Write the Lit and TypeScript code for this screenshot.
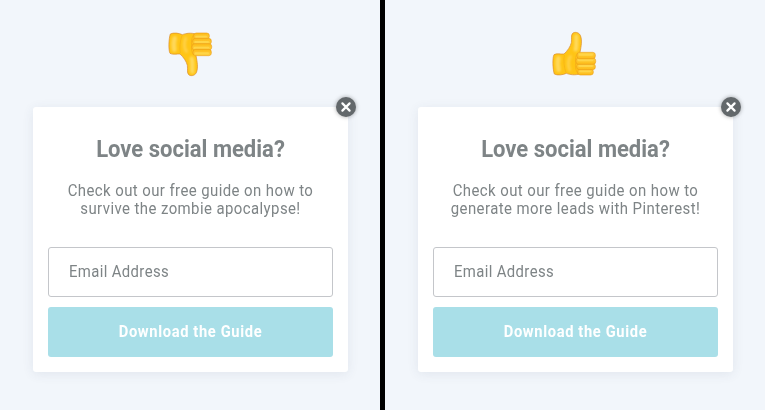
import { LitElement, html, svg, css } from "lit";
import { customElement, property } from "lit/decorators.js";
import { classMap } from "lit/directives/class-map.js";

@customElement("thumb-icon")
class ThumbIcon extends LitElement {
  @property({ type: Boolean }) down = false;

  static styles = css`
    :host { display: block; width: 60px; height: 60px; }
    svg { display: block; width: 60px; height: 60px; }
    .flip { transform: scaleY(-1); }
    .soft { filter: blur(2.5px); }
  `;

  render() {
    const finger = (x: number, y: number, w: number, h: number) => svg`
      <rect x=${x} y=${y} width=${w} height=${h} rx="8" fill="url(#f)" stroke="#eb9c18" stroke-width="1.8"/>
      <path d="M${x + 8} ${y + 7}h${w - 18}" stroke="#ffd548" stroke-width="6" stroke-linecap="round"/>`;
    return html`
      <svg viewBox="0 0 180 180" fill="none" class=${classMap({ flip: this.down })}>
        <defs>
          <linearGradient id="f" x1="0" y1="0" x2="0" y2="1">
            <stop offset="0" stop-color="#ffd042"/>
            <stop offset="1" stop-color="#fdbb17"/>
          </linearGradient>
        </defs>
        <path d="M27 92C33 87 50 91 57 90C68 80 76 68 79 56C81 44 77 34 83 28C88 23 101 24 106 34C112 48 109 66 105 85L106 149C90 155 75 152 64 148C54 153 37 155 28 150C23 136 22 101 27 92Z"
          fill="#ffc515" stroke="#d98a2c" stroke-width="2"/>
        <g class="soft">
          <path d="M94 37C93 50 96 63 92 76" stroke="#ffd95a" stroke-width="13" stroke-linecap="round"/>
          <path d="M76 98C68 108 69 126 74 137" stroke="#ffd044" stroke-width="10" stroke-linecap="round"/>
          <path d="M40 103C37 114 38 127 41 137" stroke="#ffd85a" stroke-width="14" stroke-linecap="round"/>
        </g>
        <path d="M58 93C55 106 57 132 63 146" stroke="#f4af16" stroke-width="2"/>
        ${finger(98, 135, 47, 18)}
        ${finger(95, 119, 56, 18)}
        ${finger(93, 102, 59, 19)}
        ${finger(96, 85, 55, 19)}
        <path d="M98 87C92 94 90 106 92 116C90 128 92 142 100 150" stroke="#f3a81a" stroke-width="2"/>
      </svg>`;
  }
}

@customElement("signup-card")
class SignupCard extends LitElement {
  @property({ type: Array }) lines: string[] = [];

  static styles = css`
    :host { display: block; }
    .card {
      position: relative; box-sizing: border-box; width: 315px; height: 265px;
      padding: 28px 15px 15px; border-radius: 3px; background: #fff;
      box-shadow: 0 2px 12px rgba(60, 70, 100, .09);
      font-family: Roboto, "Liberation Sans", sans-serif; text-align: center;
    }
    h2 { margin: 0; font-size: 24px; line-height: 28px; font-weight: 700; letter-spacing: 0; color: #7e8486; transform: scaleX(.918); }
    p { margin: 19px 0 0; font-size: 16px; line-height: 18px; font-weight: 400; letter-spacing: .45px; height: 65px; color: #7e8486; transform: scaleX(.934); }
    .line { display: block; white-space: nowrap; }
    .field {
      box-sizing: border-box; height: 50px; padding: 0 19.5px; border: 1px solid #c4c6ca; border-radius: 3px;
      font-size: 16px; line-height: 48px; font-weight: 400; letter-spacing: .4px; text-align: left; color: #7e8486;
    }
    .hint { display: block; transform: scaleX(.93); transform-origin: left; }
    .submit {
      display: block; width: 100%; height: 50px; margin-top: 10px; padding: 0; border: 0; border-radius: 3px;
      background: #a9dfe8; color: #fff; font: 700 16px/50px Roboto, "Liberation Sans", sans-serif; letter-spacing: .7px;
    }
    .label { display: block; transform: scaleX(.918); }
    .close {
      position: absolute; top: -10px; right: -8px; width: 20px; height: 20px; border-radius: 50%;
      background: #63686b; box-shadow: 0 0 4px rgba(0, 0, 0, .35);
    }
    .close svg { display: block; }
  `;

  render() {
    return html`
      <div class="card">
        <h2>Love social media?</h2>
        <p>${this.lines.map((l) => html`<span class="line">${l}</span>`)}</p>
        <div class="field"><span class="hint">Email Address</span></div>
        <button class="submit"><span class="label">Download the Guide</span></button>
        <div class="close">
          <svg width="20" height="20" viewBox="0 0 20 20">
            <path d="M6.4 6.4l7.2 7.2M13.6 6.4l-7.2 7.2" stroke="#fff" stroke-width="2.2" stroke-linecap="round"/>
          </svg>
        </div>
      </div>`;
  }
}

@customElement("app-root")
class AppRoot extends LitElement {
  static styles = css`
    :host { display: grid; grid-template-columns: 380px 380px; column-gap: 5px; width: 765px; height: 410px; background: #000; overflow: hidden; }
    .pane { display: flex; flex-direction: column; background: #f2f6fb; padding: 24px 0 0 33px; }
    thumb-icon { margin: 0 0 23px 127px; }
    .down { margin-left: 128px; }
  `;

  render() {
    return html`
      <section class="pane">
        <thumb-icon class="down" down></thumb-icon>
        <signup-card .lines=${["Check out our free guide on how to", "survive the zombie apocalypse!"]}></signup-card>
      </section>
      <section class="pane">
        <thumb-icon></thumb-icon>
        <signup-card .lines=${["Check out our free guide on how to", "generate more leads with Pinterest!"]}></signup-card>
      </section>`;
  }
}
